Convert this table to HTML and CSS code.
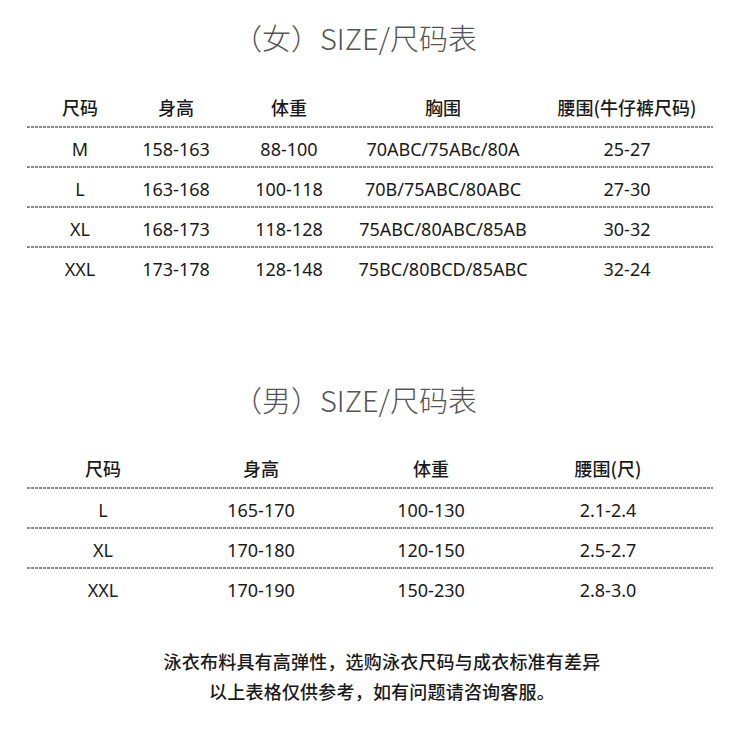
FILE: index.html
```html
<!DOCTYPE html>
<html lang="zh-CN">
<head>
<meta charset="utf-8">
<title>SIZE/尺码表</title>
<link rel="stylesheet" href="styles.css">
</head>
<body>
<main class="page">
  <h1 class="title">（女）SIZE/尺码表</h1>
  <section class="table t-women">
    <div class="row head">
      <span>尺码</span><span>身高</span><span>体重</span><span>胸围</span><span>腰围(牛仔裤尺码)</span>
    </div>
    <div class="row data">
      <span>M</span><span>158-163</span><span>88-100</span><span>70ABC/75ABc/80A</span><span>25-27</span>
    </div>
    <div class="row data">
      <span>L</span><span>163-168</span><span>100-118</span><span>70B/75ABC/80ABC</span><span>27-30</span>
    </div>
    <div class="row data">
      <span>XL</span><span>168-173</span><span>118-128</span><span>75ABC/80ABC/85AB</span><span>30-32</span>
    </div>
    <div class="row data">
      <span>XXL</span><span>173-178</span><span>128-148</span><span>75BC/80BCD/85ABC</span><span>32-24</span>
    </div>
  </section>

  <h1 class="title title-men">（男）SIZE/尺码表</h1>
  <section class="table t-men">
    <div class="row head">
      <span>尺码</span><span>身高</span><span>体重</span><span>腰围(尺)</span>
    </div>
    <div class="row data">
      <span>L</span><span>165-170</span><span>100-130</span><span>2.1-2.4</span>
    </div>
    <div class="row data">
      <span>XL</span><span>170-180</span><span>120-150</span><span>2.5-2.7</span>
    </div>
    <div class="row data">
      <span>XXL</span><span>170-190</span><span>150-230</span><span>2.8-3.0</span>
    </div>
  </section>

  <footer class="note">
    <p>泳衣布料具有高弹性，选购泳衣尺码与成衣标准有差异</p>
    <p>以上表格仅供参考，如有问题请咨询客服。</p>
  </footer>
</main>
</body>
</html>
```

FILE: styles.css
```css
html, body {
  margin: 0;
  padding: 0;
  background: #ffffff;
}

.page {
  width: 750px;
  padding-top: 17px;
  font-family: "Noto Sans", "Noto Sans CJK SC", sans-serif;
  color: #1a1a1a;
}

.title {
  margin: 0;
  height: 40px;
  line-height: 40px;
  text-align: center;
  font-family: "Noto Sans CJK SC", sans-serif;
  font-weight: 300;
  font-size: 29px;
  color: #555;
  padding-right: 40px;
}

.title-men {
  margin-top: 93px;
}

.table {
  width: 686px;
  margin-left: 27px;
  margin-top: 31px;
}

.t-men {
  margin-top: 30px;
}

.row {
  display: grid;
  align-items: center;
  justify-items: center;
  white-space: nowrap;
}

.t-women .row {
  grid-template-columns: 106px 86px 140px 168px 200px;
}

.t-men .row {
  grid-template-columns: 152px 164px 176px 178px;
}

.row.head {
  height: 38px;
  font-family: "Noto Sans CJK SC", sans-serif;
  font-weight: 500;
  font-size: 18px;
  color: #1a1a1a;
}

.row.data {
  height: 34px;
  padding-top: 6px;
  font-size: 18px;
  color: #1a1a1a;
  background-image: linear-gradient(to right, #8a8a8a 0 3px, transparent 3px 4px);
  background-size: 4px 2px;
  background-repeat: repeat-x;
  background-position: 0 0;
  width: 686px;
}

.note {
  margin-top: 39px;
  padding-left: 14px;
  text-align: center;
  font-family: "Noto Sans CJK SC", sans-serif;
  font-weight: 500;
  font-size: 18px;
  letter-spacing: 0.2px;
  color: #1a1a1a;
}

.note p {
  margin: 0;
  line-height: 30px;
}
```
